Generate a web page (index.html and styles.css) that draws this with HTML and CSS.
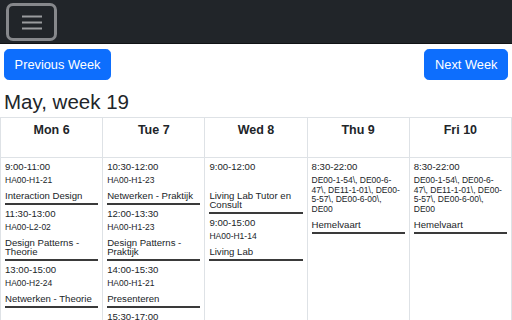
FILE: index.html
```html
<!DOCTYPE html>
<html lang="nl">
<head>
<meta charset="utf-8">
<title>Rooster</title>
<link rel="stylesheet" href="styles.css">
</head>
<body>
<nav class="navbar">
  <button class="toggler" aria-label="Menu">
    <svg class="toggler-icon" width="24" height="24" viewBox="0 0 24 24">
      <path d="M2 6.5h20M2 12.5h20M2 18.5h20" stroke="#9a9c9e" stroke-width="2" fill="none"/>
    </svg>
  </button>
</nav>
<main class="page">
  <div class="week-nav">
    <button class="btn">Previous Week</button>
    <button class="btn">Next Week</button>
  </div>
  <h2 class="title">May, week 19</h2>
  <table class="schedule">
    <thead>
      <tr>
        <th>Mon 6</th>
        <th>Tue 7</th>
        <th>Wed 8</th>
        <th>Thu 9</th>
        <th>Fri 10</th>
      </tr>
    </thead>
    <tbody>
      <tr>
        <td>
          <div class="event"><div class="time">9:00-11:00</div><div class="room">HA00-H1-21</div><div class="name">Interaction Design</div></div>
          <div class="event"><div class="time">11:30-13:00</div><div class="room">HA00-L2-02</div><div class="name">Design Patterns - Theorie</div></div>
          <div class="event"><div class="time">13:00-15:00</div><div class="room">HA00-H2-24</div><div class="name">Netwerken - Theorie</div></div>
        </td>
        <td>
          <div class="event"><div class="time">10:30-12:00</div><div class="room">HA00-H1-23</div><div class="name">Netwerken - Praktijk</div></div>
          <div class="event"><div class="time">12:00-13:30</div><div class="room">HA00-H1-23</div><div class="name">Design Patterns - Praktijk</div></div>
          <div class="event"><div class="time">14:00-15:30</div><div class="room">HA00-H1-21</div><div class="name">Presenteren</div></div>
          <div class="event"><div class="time">15:30-17:00</div><div class="room">HA00-H1-21</div><div class="name">Presenteren</div></div>
        </td>
        <td>
          <div class="event"><div class="time">9:00-12:00</div><div class="room"></div><div class="name">Living Lab Tutor en Consult</div></div>
          <div class="event"><div class="time">9:00-15:00</div><div class="room">HA00-H1-14</div><div class="name">Living Lab</div></div>
        </td>
        <td>
          <div class="event"><div class="time">8:30-22:00</div><div class="room">DE00-1-54\, DE00-6-47\, DE11-1-01\, DE00-5-57\, DE00-6-00\, DE00</div><div class="name">Hemelvaart</div></div>
        </td>
        <td>
          <div class="event"><div class="time">8:30-22:00</div><div class="room">DE00-1-54\, DE00-6-47\, DE11-1-01\, DE00-5-57\, DE00-6-00\, DE00</div><div class="name">Hemelvaart</div></div>
        </td>
      </tr>
    </tbody>
  </table>
</main>
</body>
</html>
```
FILE: styles.css
```css
html, body {
  margin: 0;
  padding: 0;
  background: #fff;
  color: #212529;
  font-family: "Liberation Sans", Arial, sans-serif;
}

.navbar {
  height: 43px;
  background: #212529;
  border-bottom: 1px solid #111315;
  display: flex;
  align-items: center;
  padding: 0 6px;
}

.toggler {
  box-sizing: border-box;
  width: 51px;
  height: 38px;
  margin-top: 1px;
  background: transparent;
  border: 3px solid #86888b;
  border-radius: 7px;
  display: flex;
  align-items: center;
  justify-content: center;
  padding: 0;
}

.toggler-icon {
  display: block;
  margin-top: -1px;
}

.page {
  padding: 5px 4px 0;
}

.week-nav {
  display: flex;
  justify-content: space-between;
}

.btn {
  font-family: "Liberation Sans", Arial, sans-serif;
  font-size: 12.8px;
  line-height: 19.2px;
  color: #fff;
  background: #0d6efd;
  border: 1px solid #0d6efd;
  border-radius: 4.8px;
  padding: 4.8px 9.6px;
}

.title {
  font-size: 20.5px;
  font-weight: 400;
  line-height: 24px;
  margin: 10px 0 3px;
}

.schedule {
  width: calc(100% + 8px);
  margin: 0 -4px;
  border-collapse: collapse;
  table-layout: fixed;
}

.schedule th,
.schedule td {
  border: 1px solid #dee2e6;
}

.schedule th {
  font-size: 12.5px;
  font-weight: 700;
  line-height: 18px;
  padding: 3px 4px 18px;
  text-align: center;
  vertical-align: top;
}

.schedule td {
  padding: 2px 4px 1px;
  vertical-align: top;
}

.event {
  border-bottom: 2px solid #3a3a3a;
  margin-bottom: 2px;
  padding-bottom: 2px;
}

.time {
  font-size: 9.6px;
  line-height: 14px;
}

.room {
  font-size: 8.5px;
  line-height: 9.8px;
  min-height: 10px;
  padding: 2px 0;
}

.name {
  font-size: 9.6px;
  line-height: 9px;
  padding-top: 3.5px;
  padding-bottom: 0.5px;
}
```
